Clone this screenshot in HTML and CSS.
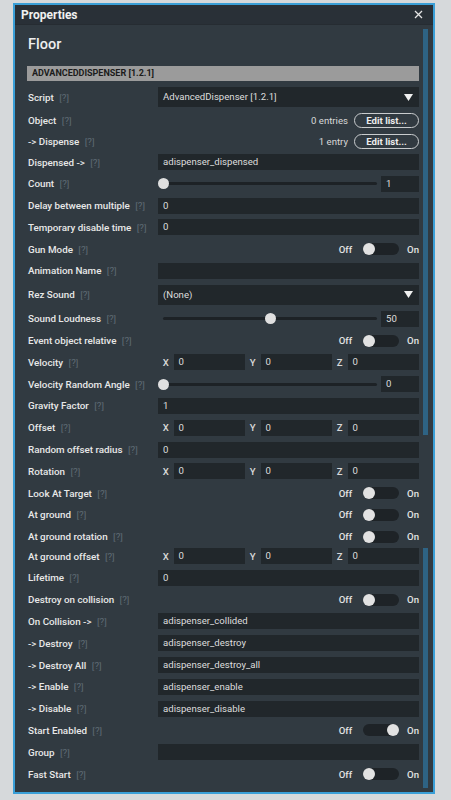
FILE: index.html
```html
<!DOCTYPE html>
<html lang="en">
<head>
<meta charset="UTF-8">
<meta name="viewport" content="width=device-width, initial-scale=1.0">
<title>Properties</title>
<link rel="stylesheet" href="styles.css">
</head>
<body>
<div class="panel">
  <div class="titlebar">
    <span class="title">Properties</span>
    <svg class="close" width="9" height="9" viewBox="0 0 9 9"><path d="M1 1 L8 8 M8 1 L1 8" stroke="#e4e4e4" stroke-width="1.3" fill="none"/></svg>
  </div>
  <div class="panel-body">
    <div class="content">
      <div class="object-name">Floor</div>
      <div class="section">ADVANCEDDISPENSER [1.2.1]</div>

      <div class="row tall">
        <div class="label">Script <span class="hint">[?]</span></div>
        <div class="select">AdvancedDispenser [1.2.1]<svg class="arrow" width="9" height="7" viewBox="0 0 9 7"><path d="M0 0 H9 L4.5 7 Z" fill="#f0f0f0"/></svg></div>
      </div>
      <div class="row tight">
        <div class="label">Object <span class="hint">[?]</span></div>
        <div class="list-val"><span class="count">0 entries</span><span class="edit-btn">Edit list...</span></div>
      </div>
      <div class="row tight">
        <div class="label">-&gt; Dispense <span class="hint">[?]</span></div>
        <div class="list-val"><span class="count">1 entry</span><span class="edit-btn">Edit list...</span></div>
      </div>
      <div class="row tight">
        <div class="label">Dispensed -&gt; <span class="hint">[?]</span></div>
        <div class="input">adispenser_dispensed</div>
      </div>
      <div class="row">
        <div class="label">Count <span class="hint">[?]</span></div>
        <div class="slider"><div class="track"><span class="knob" style="left: 0%"></span></div><div class="num">1</div></div>
      </div>
      <div class="row">
        <div class="label">Delay between multiple <span class="hint">[?]</span></div>
        <div class="input">0</div>
      </div>
      <div class="row">
        <div class="label">Temporary disable time <span class="hint">[?]</span></div>
        <div class="input">0</div>
      </div>
      <div class="row">
        <div class="label">Gun Mode <span class="hint">[?]</span></div>
        <div class="toggle"><span>Off</span><span class="switch"><span class="knob"></span></span><span>On</span></div>
      </div>
      <div class="row">
        <div class="label">Animation Name <span class="hint">[?]</span></div>
        <div class="input"></div>
      </div>
      <div class="row tall">
        <div class="label">Rez Sound <span class="hint">[?]</span></div>
        <div class="select">(None)<svg class="arrow" width="9" height="7" viewBox="0 0 9 7"><path d="M0 0 H9 L4.5 7 Z" fill="#f0f0f0"/></svg></div>
      </div>
      <div class="row">
        <div class="label">Sound Loudness <span class="hint">[?]</span></div>
        <div class="slider"><div class="track"><span class="knob" style="left: 50%"></span></div><div class="num">50</div></div>
      </div>
      <div class="row">
        <div class="label">Event object relative <span class="hint">[?]</span></div>
        <div class="toggle"><span>Off</span><span class="switch"><span class="knob"></span></span><span>On</span></div>
      </div>
      <div class="row">
        <div class="label">Velocity <span class="hint">[?]</span></div>
        <div class="vector">
          <div class="axis"><span>X</span><div class="input">0</div></div>
          <div class="axis"><span>Y</span><div class="input">0</div></div>
          <div class="axis"><span>Z</span><div class="input">0</div></div>
        </div>
      </div>
      <div class="row">
        <div class="label">Velocity Random Angle <span class="hint">[?]</span></div>
        <div class="slider"><div class="track"><span class="knob" style="left: 0%"></span></div><div class="num">0</div></div>
      </div>
      <div class="row">
        <div class="label">Gravity Factor <span class="hint">[?]</span></div>
        <div class="input">1</div>
      </div>
      <div class="row">
        <div class="label">Offset <span class="hint">[?]</span></div>
        <div class="vector">
          <div class="axis"><span>X</span><div class="input">0</div></div>
          <div class="axis"><span>Y</span><div class="input">0</div></div>
          <div class="axis"><span>Z</span><div class="input">0</div></div>
        </div>
      </div>
      <div class="row">
        <div class="label">Random offset radius <span class="hint">[?]</span></div>
        <div class="input">0</div>
      </div>
      <div class="row">
        <div class="label">Rotation <span class="hint">[?]</span></div>
        <div class="vector">
          <div class="axis"><span>X</span><div class="input">0</div></div>
          <div class="axis"><span>Y</span><div class="input">0</div></div>
          <div class="axis"><span>Z</span><div class="input">0</div></div>
        </div>
      </div>
      <div class="row">
        <div class="label">Look At Target <span class="hint">[?]</span></div>
        <div class="toggle"><span>Off</span><span class="switch"><span class="knob"></span></span><span>On</span></div>
      </div>
      <div class="row">
        <div class="label">At ground <span class="hint">[?]</span></div>
        <div class="toggle"><span>Off</span><span class="switch"><span class="knob"></span></span><span>On</span></div>
      </div>
      <div class="row">
        <div class="label">At ground rotation <span class="hint">[?]</span></div>
        <div class="toggle"><span>Off</span><span class="switch"><span class="knob"></span></span><span>On</span></div>
      </div>
      <div class="row close-up">
        <div class="label">At ground offset <span class="hint">[?]</span></div>
        <div class="vector">
          <div class="axis"><span>X</span><div class="input">0</div></div>
          <div class="axis"><span>Y</span><div class="input">0</div></div>
          <div class="axis"><span>Z</span><div class="input">0</div></div>
        </div>
      </div>
      <div class="row">
        <div class="label">Lifetime <span class="hint">[?]</span></div>
        <div class="input">0</div>
      </div>
      <div class="row">
        <div class="label">Destroy on collision <span class="hint">[?]</span></div>
        <div class="toggle"><span>Off</span><span class="switch"><span class="knob"></span></span><span>On</span></div>
      </div>
      <div class="row">
        <div class="label">On Collision -&gt; <span class="hint">[?]</span></div>
        <div class="input">adispenser_collided</div>
      </div>
      <div class="row">
        <div class="label">-&gt; Destroy <span class="hint">[?]</span></div>
        <div class="input">adispenser_destroy</div>
      </div>
      <div class="row">
        <div class="label">-&gt; Destroy All <span class="hint">[?]</span></div>
        <div class="input">adispenser_destroy_all</div>
      </div>
      <div class="row">
        <div class="label">-&gt; Enable <span class="hint">[?]</span></div>
        <div class="input">adispenser_enable</div>
      </div>
      <div class="row">
        <div class="label">-&gt; Disable <span class="hint">[?]</span></div>
        <div class="input">adispenser_disable</div>
      </div>
      <div class="row">
        <div class="label">Start Enabled <span class="hint">[?]</span></div>
        <div class="toggle"><span>Off</span><span class="switch on"><span class="knob"></span></span><span>On</span></div>
      </div>
      <div class="row">
        <div class="label">Group <span class="hint">[?]</span></div>
        <div class="input"></div>
      </div>
      <div class="row">
        <div class="label">Fast Start <span class="hint">[?]</span></div>
        <div class="toggle"><span>Off</span><span class="switch"><span class="knob"></span></span><span>On</span></div>
      </div>
    </div>
    <div class="scrollbar">
      <div class="thumb top"></div>
      <div class="thumb bottom"></div>
    </div>
  </div>
</div>
</body>
</html>
```

FILE: styles.css
```css
body {
  margin: 0;
  padding: 0;
  background-color: #d6d9db;
  font-family: Roboto, "Noto Sans", sans-serif;
  color: #e6e6e6;
}

.panel {
  box-sizing: border-box;
  width: 422px;
  height: 791px;
  margin: 3px 0 0 13px;
  border: 2px solid #3a9fd7;
  background-color: #313a41;
  display: flex;
  flex-direction: column;
}

.titlebar {
  height: 20px;
  background-color: #293037;
  border-bottom: 1px solid #262c32;
  display: flex;
  align-items: center;
  justify-content: space-between;
  padding: 0 10px 0 6px;
}

.title {
  font-size: 12px;
  font-weight: 700;
  color: #f0f0f0;
}

.panel-body {
  flex: 1;
  display: flex;
}

.content {
  flex: 1;
  padding: 9px 4px 0 12px;
  display: flex;
  flex-direction: column;
}

.object-name {
  font-size: 14.5px;
  line-height: 20px;
  font-weight: 500;
  color: #eeeeee;
  padding: 1px 0 0 1px;
  height: 19px;
}

.section {
  margin-top: 12px;
  height: 15px;
  line-height: 15px;
  background-color: #9b9b9b;
  color: #1c1c1c;
  font-size: 9px;
  font-weight: 700;
  padding-left: 5px;
}

.row {
  display: flex;
  align-items: center;
  height: 16px;
  margin-top: 5.8px;
}

.row.tall {
  height: 20px;
  margin-top: 6px;
}

.row.tight {
  margin-top: 5px;
}

.row.close-up {
  margin-top: 3.3px;
}

.label {
  width: 130px;
  flex-shrink: 0;
  font-size: 9.8px;
  font-weight: 500;
  color: #e8e8e8;
  padding-left: 1px;
  white-space: nowrap;
}

.hint {
  color: #5f6b74;
  font-weight: 400;
  margin-left: 3px;
}

.input,
.select,
.num {
  box-sizing: border-box;
  height: 16px;
  line-height: 16px;
  background-color: #21272b;
  font-size: 9.6px;
  color: #dedede;
  padding-left: 5px;
}

.row > .input {
  flex: 1;
}

.select {
  flex: 1;
  height: 20px;
  line-height: 20px;
  display: flex;
  justify-content: space-between;
  align-items: center;
  padding-right: 6px;
}

.list-val {
  flex: 1;
  display: flex;
  justify-content: flex-end;
  align-items: center;
  font-size: 9.6px;
}

.count {
  color: #d8d8d8;
  margin-right: 6px;
}

.edit-btn {
  box-sizing: border-box;
  width: 65px;
  height: 15px;
  line-height: 13px;
  border: 1.3px solid #c9ccce;
  border-radius: 8px;
  text-align: center;
  font-weight: 700;
  color: #ececec;
}

.slider {
  flex: 1;
  display: flex;
  align-items: center;
}

.track {
  position: relative;
  flex: 1;
  height: 3px;
  margin: 0 4px 0 5px;
  background-color: #1d2226;
  border-radius: 2px;
}

.track .knob {
  position: absolute;
  top: -4px;
  width: 11px;
  height: 11px;
  margin-left: -5px;
  border-radius: 50%;
  background-color: #e0e0e0;
}

.num {
  width: 38px;
}

.toggle {
  flex: 1;
  display: flex;
  justify-content: flex-end;
  align-items: center;
  font-size: 9.6px;
  font-weight: 500;
  color: #e4e4e4;
}

.switch {
  display: flex;
  align-items: center;
  width: 36px;
  height: 12px;
  margin: 0 8px 0 11px;
  border-radius: 6px;
  background-color: #1e2327;
}

.switch.on {
  justify-content: flex-end;
}

.switch .knob {
  width: 12px;
  height: 12px;
  border-radius: 50%;
  background-color: #e2e2e2;
}

.vector {
  flex: 1;
  display: grid;
  grid-template-columns: repeat(3, 1fr);
}

.axis {
  display: flex;
  align-items: center;
}

.axis span {
  width: 15.5px;
  text-align: center;
  font-size: 9.6px;
  font-weight: 500;
  color: #d8d8d8;
}

.axis .input {
  flex: 1;
}

.scrollbar {
  width: 5px;
  margin: 4px 5px 4px 0;
  display: flex;
  flex-direction: column;
}

.thumb {
  background-color: #2e6384;
}

.thumb.top {
  height: 406px;
}

.thumb.bottom {
  height: 240px;
  margin-top: 113px;
}
```
